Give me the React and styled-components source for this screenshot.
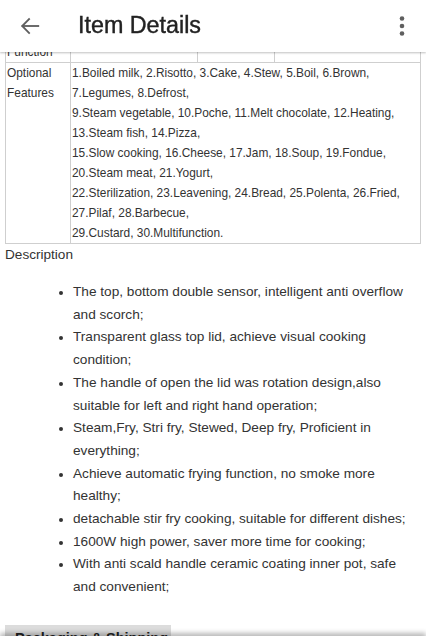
import React from "react";
import styled, { createGlobalStyle } from "styled-components";

const Global = createGlobalStyle`
  html, body { margin: 0; padding: 0; background: #fff; }
  body { font-family: "Liberation Sans", Arial, sans-serif; color: #333; overflow: hidden; }
`;

const Header = styled.header`
  position: fixed;
  top: 0; left: 0; right: 0;
  height: 52px;
  background: #fff;
  display: flex;
  align-items: center;
  box-shadow: 0 1px 2px rgba(0,0,0,0.25);
  z-index: 10;
`;

const IconButton = styled.button`
  border: 0;
  background: none;
  padding: 0;
  width: ${p => p.$w}px;
  height: 52px;
  display: flex;
  align-items: center;
  justify-content: center;
  color: #5f5f5f;
`;

const Title = styled.h1`
  flex: 1;
  margin: -2px 0 0 18px;
  font-family: "Liberation Sans", Arial, sans-serif;
  font-weight: 400;
  font-size: 23.3px;
  color: #222;
  -webkit-text-stroke: 0.4px #222;
`;

const Page = styled.main`
  padding: 41px 5px 60px;
`;

const Table = styled.table`
  width: 100%;
  border-collapse: collapse;
  font-size: 11.9px;
  line-height: 20px;
  color: #333;
`;

const Cell = styled.td`
  border: 1px solid #cfcfcf;
  padding: 0 1px;
  vertical-align: top;
  width: ${p => (p.$w ? p.$w + "px" : "auto")};
`;

const SectionLabel = styled.div`
  font-size: 13.6px;
  color: #333;
  margin-top: 2px;
  line-height: 18px;
`;

const List = styled.ul`
  margin: 17px 0 0;
  padding-left: 68px;
  padding-right: 6px;
  font-size: 13.65px;
  line-height: 22.7px;
  color: #333;
  li::marker { font-size: 12.5px; }
`;

const Tab = styled.div`
  display: inline-block;
  margin-top: 26px;
  background: #dcdcdc;
  padding: 5px 10px 6px;
  width: 146px;
  font-weight: 700;
  font-size: 14.5px;
  color: #222;
  white-space: nowrap;
`;

const BottomBar = styled.div`
  position: fixed;
  left: 0; right: 0;
  bottom: -10px;
  height: 14px;
  background: #fff;
  box-shadow: 0 -3px 5px rgba(0,0,0,0.28);
  z-index: 10;
`;

const features = [
  "1.Boiled milk, 2.Risotto, 3.Cake, 4.Stew, 5.Boil, 6.Brown,",
  "7.Legumes, 8.Defrost,",
  "9.Steam vegetable, 10.Poche, 11.Melt chocolate, 12.Heating,",
  "13.Steam fish, 14.Pizza,",
  "15.Slow cooking, 16.Cheese, 17.Jam, 18.Soup, 19.Fondue,",
  "20.Steam meat, 21.Yogurt,",
  "22.Sterilization, 23.Leavening, 24.Bread, 25.Polenta, 26.Fried,",
  "27.Pilaf, 28.Barbecue,",
  "29.Custard, 30.Multifunction.",
];

const bullets = [
  "The top, bottom double sensor, intelligent anti overflow and scorch;",
  "Transparent glass top lid, achieve visual cooking condition;",
  "The handle of open the lid was rotation design,also suitable for left and right hand operation;",
  "Steam,Fry, Stri fry, Stewed, Deep fry, Proficient in everything;",
  "Achieve automatic frying function, no smoke more healthy;",
  "detachable stir fry cooking, suitable for different dishes;",
  "1600W high power, saver more time for cooking;",
  "With anti scald handle ceramic coating inner pot, safe and convenient;",
];

export default function App() {
  return (
    <>
      <Global />
      <Header>
        <IconButton $w={60} aria-label="back">
          <svg width="22" height="22" viewBox="0 0 24 24" fill="none" stroke="#5f5f5f" strokeWidth="2" strokeLinecap="square">
            <path d="M21 12H4" />
            <path d="M11 4.5L3.5 12L11 19.5" />
          </svg>
        </IconButton>
        <Title>Item Details</Title>
        <IconButton $w={48} aria-label="more">
          <svg width="6" height="20" viewBox="0 0 6 20" fill="#5f5f5f">
            <circle cx="3" cy="2.5" r="2.3" />
            <circle cx="3" cy="10" r="2.3" />
            <circle cx="3" cy="17.5" r="2.3" />
          </svg>
        </IconButton>
      </Header>
      <Page>
        <Table>
          <tbody>
            <tr>
              <Cell $w={62}>Function</Cell>
              <Cell $w={124}></Cell>
              <Cell $w={74}></Cell>
              <Cell></Cell>
            </tr>
            <tr>
              <Cell>Optional Features</Cell>
              <Cell colSpan={3}>
                {features.map(f => (
                  <div key={f}>{f}</div>
                ))}
              </Cell>
            </tr>
          </tbody>
        </Table>
        <SectionLabel>Description</SectionLabel>
        <List>
          {bullets.map(b => (
            <li key={b}>{b}</li>
          ))}
        </List>
        <Tab>Packaging &amp; Shipping</Tab>
      </Page>
      <BottomBar />
    </>
  );
}
